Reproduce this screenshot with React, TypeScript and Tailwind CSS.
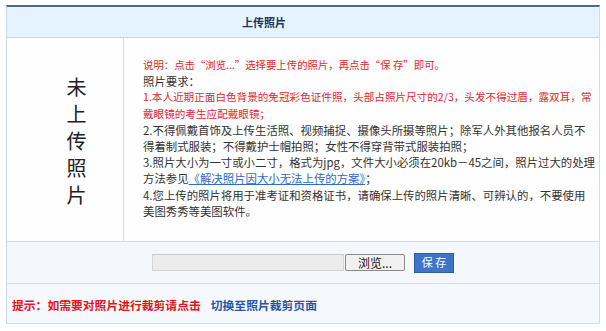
import React from "react";

const F = '"Noto Sans CJK SC", "Noto Sans", sans-serif';

export default function App() {
  return (
    <div className="w-[606px] h-[331px] bg-white pt-[5px] pl-[6px]" style={{ fontFamily: F }}>
      <div className="w-[594px] border-t-2 border-t-[#4f6a86] border-l border-l-[#cfd8e2] border-r border-r-[#d3dbe3] border-b border-b-[#d5dde5]">
        {/* header */}
        <div className="h-[31px] bg-[#e4f3fd] border-b border-[#c9d4de] flex items-center pl-[235px]">
          <span className="text-[11px] font-bold text-[#1b355e] tracking-[0px]">上传照片</span>
        </div>
        {/* main row */}
        <div className="flex h-[203px] bg-[#fefefe]">
          <div className="w-[117px] border-r border-[#d9dde1] flex flex-col items-center justify-center pl-[23px] pt-[2px]">
            <div className="text-[20px] leading-[27px] text-[#222] flex flex-col items-center">
              <span>未</span>
              <span>上</span>
              <span>传</span>
              <span>照</span>
              <span>片</span>
            </div>
          </div>
          <div className="flex-1 pl-[19px] pt-[19px] leading-[16.2px] whitespace-nowrap">
            <div className="text-[10.4px] text-[#e3262e]">说明：点击“浏览...”选择要上传的照片，再点击“保 存”即可。</div>
            <div className="text-[11.4px] text-[#333]">照片要求：</div>
            <div className="text-[10.6px] text-[#e3262e]">1.本人近期正面白色背景的免冠彩色证件照，头部占照片尺寸的2/3，头发不得过眉，露双耳，常</div>
            <div className="text-[10.6px] text-[#e3262e]">戴眼镜的考生应配戴眼镜；</div>
            <div className="text-[11.4px] text-[#333]">2.不得佩戴首饰及上传生活照、视频捕捉、摄像头所摄等照片；除军人外其他报名人员不</div>
            <div className="text-[11.4px] text-[#333]">得着制式服装；不得戴护士帽拍照；女性不得穿背带式服装拍照；</div>
            <div className="text-[11.4px] text-[#333]">3.照片大小为一寸或小二寸，格式为jpg，文件大小必须在20kb－45之间，照片过大的处理</div>
            <div className="text-[11.4px] text-[#333]">
              方法参见<span className="text-[#2f6bc8] underline">《解决照片因大小无法上传的方案》</span>；
            </div>
            <div className="text-[11.4px] text-[#333]">4.您上传的照片将用于准考证和资格证书，请确保上传的照片清晰、可辨认的，不要使用</div>
            <div className="text-[11.4px] text-[#333]">美图秀秀等美图软件。</div>
          </div>
        </div>
        {/* input row */}
        <div className="h-[42px] bg-[#f4f8fc] border-t border-[#d5dde6] flex items-center pl-[145px]">
          <div className="w-[192px] h-[17px] bg-[#ececec] border border-[#d6d6d6] border-t-[#c8c8c8]" />
          <div className="ml-[1px] w-[60px] h-[17px] bg-[#f1f1f1] border border-[#8a8a8a] rounded-[2px] flex items-center justify-center text-[12px] leading-none text-[#111]">
            浏览...
          </div>
          <div className="ml-[9px] w-[40px] h-[20px] bg-[#3f74c6] border border-[#2e5da8] flex items-center justify-center text-[11px] leading-none text-white">
            保 存
          </div>
        </div>
        {/* tip row */}
        <div className="h-[40px] bg-[#f5f9fd] border-t border-[#d5dde6] flex items-center pl-[5px] pt-[2px]">
          <span className="text-[11.8px] font-bold text-[#e3141c]">提示：如需要对照片进行裁剪请点击</span>
          <span className="ml-[10px] text-[11.8px] font-bold text-[#2a55a0]">切换至照片裁剪页面</span>
        </div>
      </div>
    </div>
  );
}
